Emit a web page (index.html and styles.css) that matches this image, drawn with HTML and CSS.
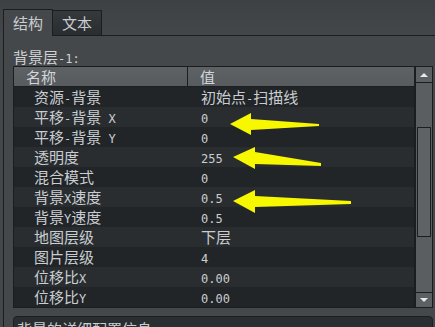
FILE: index.html
```html
<!DOCTYPE html>
<html>
<head>
<meta charset="utf-8">
<link rel="stylesheet" href="styles.css">
</head>
<body>
<div class="window">
  <div class="tabbar">
    <div class="tab active">结构</div>
    <div class="tab">文本</div>
    <div class="tabfill"></div>
  </div>
  <div class="panel">
    <div class="title">背景层<span class="lt">-1:</span></div>
    <div class="table">
      <div class="grid">
        <div class="head"><div class="hc c1">名称</div><div class="hc c2">值</div></div>
        <div class="row"><div class="k">资源<span class="lt">-</span>背景</div><div class="v">初始点<span class="lt">-</span>扫描线</div></div>
        <div class="row alt"><div class="k">平移<span class="lt">-</span>背景<span class="lt"> X</span></div><div class="v"><span class="lt">0</span></div></div>
        <div class="row"><div class="k">平移<span class="lt">-</span>背景<span class="lt"> Y</span></div><div class="v"><span class="lt">0</span></div></div>
        <div class="row alt"><div class="k">透明度</div><div class="v"><span class="lt">255</span></div></div>
        <div class="row"><div class="k">混合模式</div><div class="v"><span class="lt">0</span></div></div>
        <div class="row alt"><div class="k">背景<span class="lt">X</span>速度</div><div class="v"><span class="lt">0.5</span></div></div>
        <div class="row"><div class="k">背景<span class="lt">Y</span>速度</div><div class="v"><span class="lt">0.5</span></div></div>
        <div class="row alt"><div class="k">地图层级</div><div class="v">下层</div></div>
        <div class="row"><div class="k">图片层级</div><div class="v"><span class="lt">4</span></div></div>
        <div class="row alt"><div class="k">位移比<span class="lt">X</span></div><div class="v"><span class="lt">0.00</span></div></div>
        <div class="row"><div class="k">位移比<span class="lt">Y</span></div><div class="v"><span class="lt">0.00</span></div></div>
      </div>
      <div class="vscroll">
        <div class="sbtn up"><span class="tri-up"></span></div>
        <div class="track"><div class="thumb"></div></div>
        <div class="sbtn down"><span class="tri-down"></span></div>
      </div>
    </div>
    <div class="desc">背景的详细配置信息</div>
  </div>
</div>
<svg class="arrows" width="435" height="327" viewBox="0 0 435 327">
  <polygon points="230,124 251,113 251,119 319,124 319,126 251,130 251,135"/>
  <polygon points="233,157 255,147 255,152 321,163 321,166 255,164 255,169"/>
  <polygon points="233,201 255,190 255,196 351,201 351,204 255,207 255,213"/>
</svg>
</body>
</html>
```
FILE: styles.css
```css
html, body {
  margin: 0;
  padding: 0;
}
body {
  width: 435px;
  height: 327px;
  overflow: hidden;
  position: relative;
  background: linear-gradient(#3e4144, #44474a 36px);
  font-family: "Noto Sans CJK SC", sans-serif;
  font-size: 15px;
  color: #c9cdd1;
}
.lt {
  font-family: "DejaVu Sans Mono", monospace;
  font-size: 12px;
  line-height: 1;
  white-space: pre;
}
.window {
  padding: 9px 0 0 3px;
}
.tabbar {
  display: flex;
  align-items: flex-end;
  height: 27px;
}
.tab {
  box-sizing: border-box;
  width: 49px;
  height: 26px;
  padding: 2px 0 0 9px;
  line-height: 20px;
  border-top: 1px solid #1b1d1f;
  border-right: 1px solid #1b1d1f;
  border-bottom: 1px solid #1b1d1f;
  background: linear-gradient(#36393c, #2a2d30);
}
.tab.active {
  width: 50px;
  height: 27px;
  padding-top: 3px;
  border-left: 1px solid #1b1d1f;
  border-bottom: none;
  background: #45484b;
}
.tabfill {
  flex: 1;
  box-sizing: border-box;
  height: 1px;
  border-bottom: 1px solid #1b1d1f;
}
.panel {
  border-left: 1px solid #1b1d1f;
  background: #45484b;
  padding: 12px 0 0 9px;
  height: 300px;
}
.title {
  line-height: 18px;
  height: 18px;
  color: #cfd2d5;
}
.table {
  display: flex;
  width: 420px;
  height: 242px;
}
.grid {
  box-sizing: border-box;
  width: 402px;
  height: 242px;
  border: 1px solid #1b1d1f;
  background: #222528;
}
.head {
  display: grid;
  grid-template-columns: 174px 1fr;
  box-sizing: border-box;
  height: 20px;
  border-bottom: 1px solid #1b1d1f;
  background: linear-gradient(#5e6265, #575b5e);
  color: #d2d5d8;
}
.hc {
  line-height: 19px;
  padding-left: 12px;
}
.hc.c1 {
  border-right: 1px solid #1b1d1f;
}
.row {
  display: grid;
  grid-template-columns: 174px 1fr;
  height: 20px;
  line-height: 20px;
  overflow: hidden;
  background: #222528;
}
.row.alt {
  background: #2a2d30;
}
.k {
  padding-left: 20px;
  white-space: nowrap;
}
.v {
  padding-left: 13px;
  white-space: nowrap;
}
.vscroll {
  box-sizing: border-box;
  width: 18px;
  height: 242px;
  border: 1px solid #1b1d1f;
  background: #5a5e61;
  display: flex;
  flex-direction: column;
}
.sbtn {
  display: flex;
  align-items: center;
  justify-content: center;
  background: #5c6063;
}
.sbtn.up {
  height: 16px;
  box-sizing: border-box;
  border-bottom: 1px solid #1b1d1f;
}
.sbtn.down {
  height: 15px;
  box-sizing: border-box;
  border-top: 1px solid #1b1d1f;
}
.tri-up {
  width: 0;
  height: 0;
  border-left: 4px solid transparent;
  border-right: 4px solid transparent;
  border-bottom: 4px solid #e8e8e8;
}
.tri-down {
  width: 0;
  height: 0;
  border-left: 4px solid transparent;
  border-right: 4px solid transparent;
  border-top: 4px solid #e8e8e8;
}
.track {
  flex: 1;
}
.thumb {
  box-sizing: border-box;
  margin: 44px 0 0 1px;
  width: 14px;
  height: 110px;
  border: 1px solid #1b1d1f;
  background: #5f6366;
}
.desc {
  box-sizing: border-box;
  margin-top: 8px;
  width: 420px;
  height: 40px;
  padding: 3px 0 0 3px;
  line-height: 18px;
  border: 1px solid #1c1e20;
  border-radius: 4px;
  background: #2b2e31;
}
.arrows {
  position: absolute;
  left: 0;
  top: 0;
  pointer-events: none;
}
.arrows polygon {
  fill: #f7f700;
}
```
